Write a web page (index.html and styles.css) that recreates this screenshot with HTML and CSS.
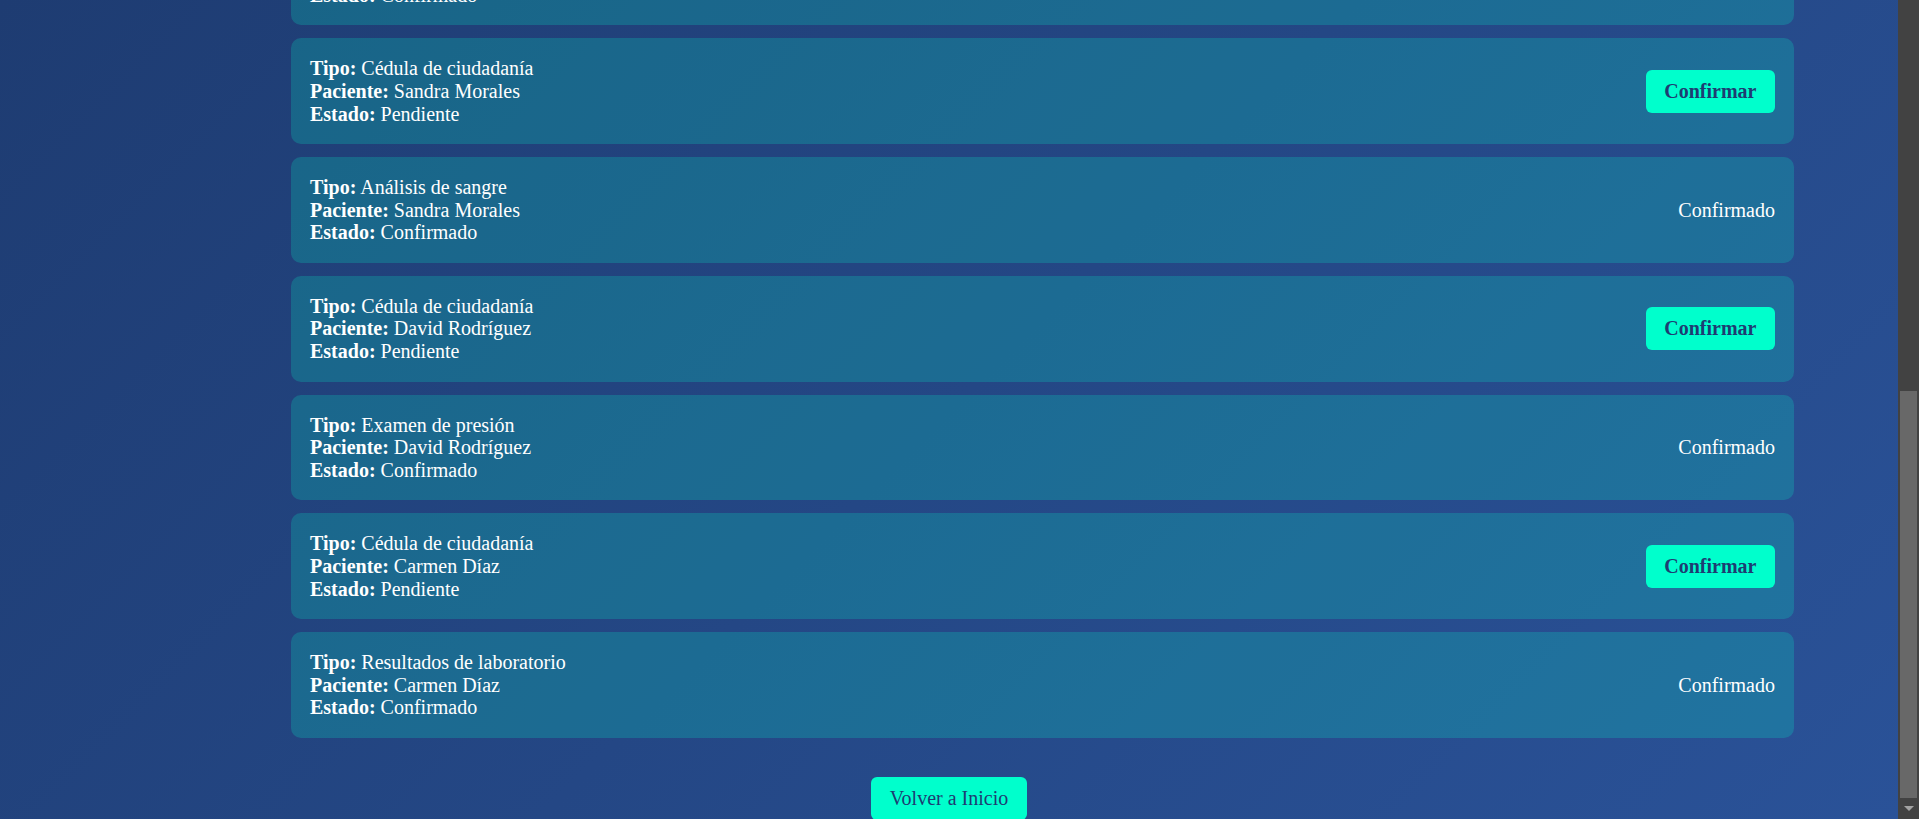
FILE: index.html
```html
<!DOCTYPE html>
<html lang="es">
<head>
<meta charset="utf-8">
<title>Documentos</title>
<link rel="stylesheet" href="styles.css">
</head>
<body>
<div class="page">
  <main class="viewport">
    <div class="content">
      <section class="list">
        <div class="card">
          <div class="info">
            <div><strong>Tipo:</strong> Examen de orina</div>
            <div><strong>Paciente:</strong> Laura Gómez</div>
            <div><strong>Estado:</strong> Confirmado</div>
          </div>
          <span class="status">Confirmado</span>
        </div>
        <div class="card">
          <div class="info">
            <div><strong>Tipo:</strong> Cédula de ciudadanía</div>
            <div><strong>Paciente:</strong> Sandra Morales</div>
            <div><strong>Estado:</strong> Pendiente</div>
          </div>
          <button class="btn-confirm">Confirmar</button>
        </div>
        <div class="card">
          <div class="info">
            <div><strong>Tipo:</strong> Análisis de sangre</div>
            <div><strong>Paciente:</strong> Sandra Morales</div>
            <div><strong>Estado:</strong> Confirmado</div>
          </div>
          <span class="status">Confirmado</span>
        </div>
        <div class="card">
          <div class="info">
            <div><strong>Tipo:</strong> Cédula de ciudadanía</div>
            <div><strong>Paciente:</strong> David Rodríguez</div>
            <div><strong>Estado:</strong> Pendiente</div>
          </div>
          <button class="btn-confirm">Confirmar</button>
        </div>
        <div class="card">
          <div class="info">
            <div><strong>Tipo:</strong> Examen de presión</div>
            <div><strong>Paciente:</strong> David Rodríguez</div>
            <div><strong>Estado:</strong> Confirmado</div>
          </div>
          <span class="status">Confirmado</span>
        </div>
        <div class="card">
          <div class="info">
            <div><strong>Tipo:</strong> Cédula de ciudadanía</div>
            <div><strong>Paciente:</strong> Carmen Díaz</div>
            <div><strong>Estado:</strong> Pendiente</div>
          </div>
          <button class="btn-confirm">Confirmar</button>
        </div>
        <div class="card">
          <div class="info">
            <div><strong>Tipo:</strong> Resultados de laboratorio</div>
            <div><strong>Paciente:</strong> Carmen Díaz</div>
            <div><strong>Estado:</strong> Confirmado</div>
          </div>
          <span class="status">Confirmado</span>
        </div>
      </section>
      <div class="footer">
        <button class="btn-back">Volver a Inicio</button>
      </div>
    </div>
  </main>
  <aside class="scrollbar">
    <div class="track">
      <div class="thumb"></div>
    </div>
    <div class="arrow"></div>
  </aside>
</div>
</body>
</html>
```

FILE: styles.css
```css
html, body {
  margin: 0;
  padding: 0;
  height: 100%;
}

body {
  font-family: "Liberation Serif", "Times New Roman", serif;
  font-size: 20px;
  color: #ffffff;
  background: #424242;
  overflow: hidden;
}

.page {
  display: flex;
  height: 100vh;
}

.viewport {
  flex: 1;
  display: flex;
  flex-direction: column;
  justify-content: flex-end;
  overflow: hidden;
  background: linear-gradient(135deg, #1e3c72 0%, #2a5298 100%);
}

.content {
  display: flex;
  flex-direction: column;
  flex-shrink: 0;
  margin-bottom: -1px;
}

.list {
  display: flex;
  flex-direction: column;
  gap: 13px;
  margin: 0 104px 0 291px;
}

.card {
  display: flex;
  align-items: center;
  justify-content: space-between;
  padding: 19px;
  border-radius: 10px;
  background: rgba(0, 255, 204, 0.2);
  line-height: 22.6px;
}

.info strong {
  font-weight: bold;
}

.status {
  color: #ffffff;
}

.btn-confirm,
.btn-back {
  font-family: "Liberation Serif", "Times New Roman", serif;
  font-size: 20px;
  line-height: 23px;
  color: #1e3c72;
  background: #00ffcc;
  border: none;
  border-radius: 6px;
  padding: 10px 18.5px;
  cursor: pointer;
}

.btn-confirm {
  font-weight: bold;
}

.btn-back {
  font-weight: normal;
  padding: 10px 19px;
}

.footer {
  display: flex;
  justify-content: center;
  margin-top: 39px;
}

.scrollbar {
  width: 21px;
  flex-shrink: 0;
  display: flex;
  flex-direction: column;
  background: #424242;
}

.track {
  flex: 1;
  display: flex;
  flex-direction: column;
  justify-content: flex-end;
  padding: 0 2px;
}

.thumb {
  height: 407px;
  background: #686868;
}

.arrow {
  height: 21px;
  display: flex;
  align-items: center;
  justify-content: center;
}

.arrow::before {
  content: "";
  width: 0;
  height: 0;
  border-left: 5px solid transparent;
  border-right: 5px solid transparent;
  border-top: 5px solid #a3a3a3;
}
```
